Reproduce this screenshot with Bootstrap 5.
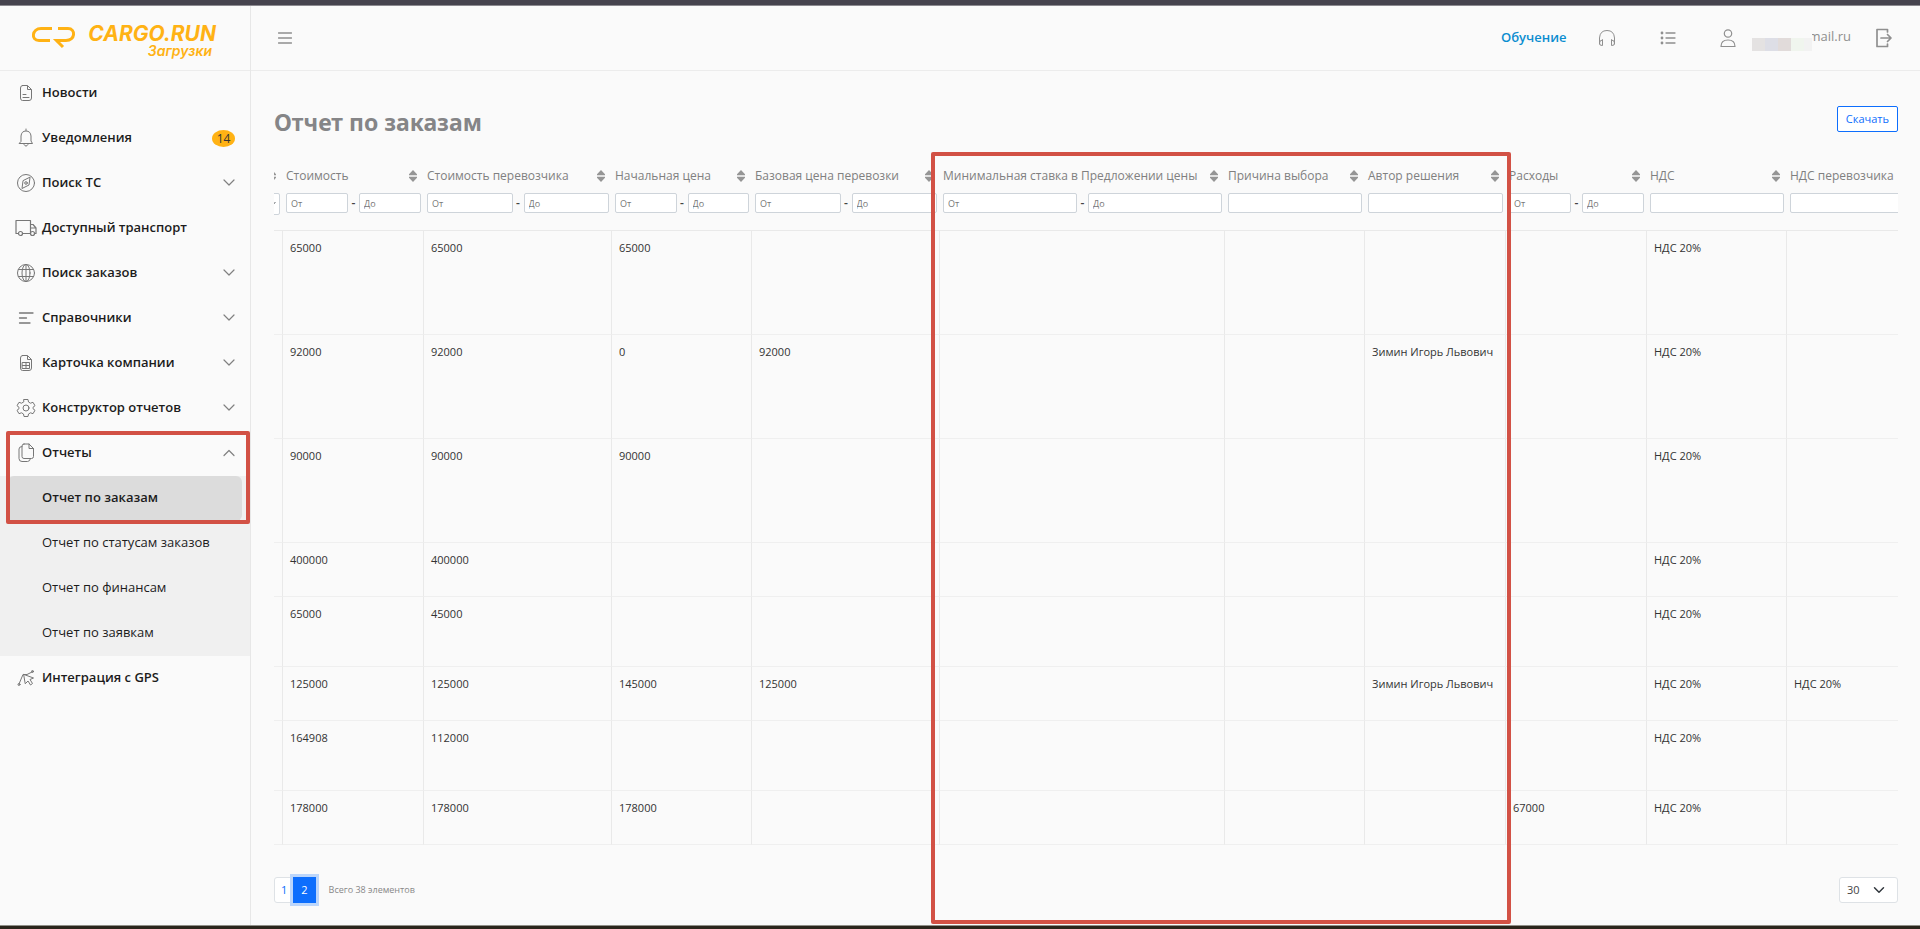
<!DOCTYPE html>
<html lang="ru">
<head>
<meta charset="utf-8">
<meta name="viewport" content="width=device-width, initial-scale=1">
<title>Отчет по заказам</title>
<link href="https://cdn.jsdelivr.net/npm/bootstrap@5.3.0/dist/css/bootstrap.min.css" rel="stylesheet">
<style>
  body { font-family: "Open Sans", "Noto Sans", sans-serif; font-size: 13px; background: #fafafa; color: #222; }
  a { text-decoration: none; color: inherit; }
  svg { display: block; fill: none; stroke: currentColor; stroke-linecap: round; stroke-linejoin: round; }
  .edge-top { height: 6px; background: #46434e; border-bottom: 1px solid #8c8a90; }
  .edge-bottom { height: 4px; background: #2b251c; border-top: 1px solid #8f8f88; }
  .marker { position: absolute; border: 4px solid #d25145; border-radius: 2px; pointer-events: none; z-index: 5; }

  /* sidebar */
  .side { width: 251px; flex: none; border-right: 1px solid #e7e7e7; }
  .brand { height: 65px; border-bottom: 1px solid #ececec; color: #ffb214; padding: 0 34px 0 31px; }
  .brand-mark { stroke-width: 3px; stroke-linecap: butt; stroke-linejoin: miter; }
  .brand-text { font-family: Inter, sans-serif; font-style: italic; text-align: right; padding-top: 6px; }
  .brand-name { font-size: 21px; line-height: 20px; font-weight: 700; }
  .brand-sub { font-size: 14px; line-height: 14px; font-weight: 600; padding-right: 4px; }
  .side .nav-link { height: 45px; padding: 0 15px 1px 12px; color: #1c1c1c; font-weight: 600; display: flex; align-items: center; }
  .side .nav-link .ico { width: 28px; margin-right: 2px; color: #777; display: flex; justify-content: center; }
  .side .nav-link .chev { margin-left: auto; color: #808080; }
  .sub { background: #f0f0f0; }
  .side .sub .nav-link { padding-left: 42px; font-weight: 400; }
  .side .sub .nav-link.active { background: #dcdcdc; border-radius: 6px; margin: 0 8px; padding-left: 34px; font-weight: 600; }
  .marker-menu { inset: 0 0 auto 6px; height: 93px; }
  .count { margin-left: auto; width: 23px; height: 17px; line-height: 17px; border-radius: 50%; padding: 0; background: #ffb214; color: #333; font-size: 12px; font-weight: 400; }

  /* top bar */
  .top { height: 65px; border-bottom: 1px solid #ececec; padding: 0 27px; color: #8f8f8f; }
  .top .btn { padding: 0; border: 0; color: inherit; }
  .top .tool { margin-left: 44px; }
  .learn { color: #0a8dd0; font-weight: 600; }
  .masked { width: 60px; height: 28px; z-index: 1; margin-right: -4px;
    background: linear-gradient(90deg, #e4e2e2 13px, #dddee6 13px 26px, #e1dbda 26px 39px, #f0f5ee 39px 52px, #f2f2f2 52px) 0 14px / 60px 13px no-repeat #fafafa; }
  .mail { height: 22px; }

  /* content */
  .content { padding: 35px 22px 22px 23px; }
  h1 { font-family: "Noto Sans", sans-serif; font-size: 23px; line-height: 32px; font-weight: 700; color: #858587; margin: 0 0 24px; }
  .btn-load { font-size: 11px; line-height: 16px; padding: 4px 8px; border-radius: 2px; --bs-btn-bg: #fff; }
  .grid-wrap { overflow-x: auto; scrollbar-width: none; }
  .grid-wrap::-webkit-scrollbar { display: none; }
  .report { table-layout: fixed; width: 1832px; border-collapse: separate; border-spacing: 0; }
  .report th { height: 69px; padding: 5px 2px 0 4px; vertical-align: top; font-weight: 400; font-size: 12px; line-height: 18px; color: #808080; border-bottom: 1px solid #e9e9e9; white-space: nowrap; }
  .report td { padding: 9px 7px 0; vertical-align: top; font-size: 11px; line-height: 16px; color: #333; border-left: 1px solid #e9e9e9; border-bottom: 1px solid #efefef; }
  .r-tall td { height: 104px; } .r-mid td { height: 70px; } .r-low td { height: 54px; }
  .cap { display: flex; justify-content: space-between; align-items: center; height: 18px; margin-bottom: 8px; padding-right: 4px; }
  .cap svg { fill: #959595; stroke: none; margin-left: auto; }
  .flt { display: flex; align-items: center; line-height: 20px; }
  .flt .form-control, .flt .form-select { flex: 1 1 0; width: 0; min-width: 0; height: 20px; min-height: 0; padding: 0 4px; font-size: 9px; line-height: 18px; border: 1px solid #ced4da; border-radius: 2px; }
  .flt .form-select { height: 22px; background-size: 8px; background-position: right 3px center; }
  .flt .form-control::placeholder { color: #777; }
  .flt span { width: 11px; text-align: center; color: #444; font-weight: 600; }

  .page-link { font-size: 11px; line-height: 16px; padding: 4px 7px; }
  .page-item:first-child .page-link { padding: 4px 6px; border-radius: 3px 0 0 3px; border-color: #dee2e6; }
  .page-item:last-child .page-link { border-radius: 0; box-shadow: 0 0 0 3px #bcd6fb; }
  .total { font-size: 9px; color: #888; margin-left: 13px; }
  .per { width: 59px; height: 26px; font-size: 11px; line-height: 16px; padding: 4px 20px 4px 7px; border-radius: 3px; background-size: 12px; background-position: right 12px center; color: #444; }
  .marker-cols { left: 680px; width: 580px; top: 146px; bottom: 1px; }
</style>
</head>
<body class="d-flex flex-column min-vh-100">
<svg width="0" height="0" class="position-absolute" aria-hidden="true">
  <symbol id="down" viewBox="0 0 12 12"><path d="M1 3l5 5 5-5" stroke-width="1.2"/></symbol>
  <symbol id="up" viewBox="0 0 12 12"><path d="M1 8.500l5-5 5 5" stroke-width="1.2"/></symbol>
  <symbol id="sort" viewBox="0 0 8 12"><path d="M4 0l4 4.200v1H0v-1zM4 12l4-4.200v-1H0v1z"/></symbol>
</svg>
<div class="edge-top"></div>
<div class="d-flex flex-grow-1">
  <aside class="side">
    <a class="brand d-flex align-items-center justify-content-between" href="#" aria-label="CARGO.RUN Загрузки">
      <svg class="brand-mark" width="46" height="24" viewBox="31 26 46 24"><path d="M52 28.500H41C32 28.500 30.500 40.500 39 40.500H50M58 28.500H68C76 28.500 75.500 40.500 66 40.500H56.500L63 47"/></svg>
      <div class="brand-text"><div class="brand-name">CARGO.RUN</div><div class="brand-sub">Загрузки</div></div>
    </a>
    <nav class="nav flex-column flex-nowrap">
      <a class="nav-link" href="#"><span class="ico"><svg width="16" height="18" viewBox="0 0 16 18"><path d="M4.500 1.500H9.500L13.500 5.500V14Q13.500 16.500 11 16.500H4.500Q2.500 16.500 2.500 14V4Q2.500 1.500 4.500 1.500ZM9.500 2V5.500H13M5 10.500H8M5 13.500H11"/></svg></span>Новости</a>
      <a class="nav-link" href="#"><span class="ico"><svg width="18" height="20" viewBox="0 0 18 20"><path d="M9 1V2.500M2.500 15.500H15.500L14 13V8Q13.500 3 9 3T4 8V13ZM7 16.500Q9 20 11 16.500"/></svg></span>Уведомления<span class="badge count">14</span></a>
      <a class="nav-link" href="#"><span class="ico"><svg width="20" height="20" viewBox="0 0 20 20"><circle cx="10" cy="10" r="8.500"/><path d="M14 4.500L13 12 6 15.500 7 8Z"/><circle cx="10" cy="10" r="1.300"/></svg></span>Поиск ТС<svg class="chev" width="12" height="12"><use href="#down"/></svg></a>
      <a class="nav-link" href="#"><span class="ico"><svg width="22" height="18" viewBox="0 0 22 18" stroke-width="1.200"><path d="M3.500 14.500H1V1.500H15.500V14.500H7.500M15.500 5.500H18L21 9V14.500H19.500M15.500 9H21"/><circle cx="5.500" cy="14.500" r="2"/><circle cx="17.500" cy="14.500" r="2"/></svg></span>Доступный транспорт</a>
      <a class="nav-link" href="#"><span class="ico"><svg width="20" height="20" viewBox="0 0 20 20"><circle cx="10" cy="10" r="8.500"/><ellipse cx="10" cy="10" rx="4" ry="8.500"/><path d="M10 1.500V18.500M2.500 6.500H17.500M2.500 13.500H17.500"/></svg></span>Поиск заказов<svg class="chev" width="12" height="12"><use href="#down"/></svg></a>
      <a class="nav-link" href="#"><span class="ico"><svg width="16" height="14" viewBox="0 0 16 14" stroke-width="1.300"><path d="M1.500 2H15M1.500 7H8.500M1.500 12H12"/></svg></span>Справочники<svg class="chev" width="12" height="12"><use href="#down"/></svg></a>
      <a class="nav-link" href="#"><span class="ico"><svg width="16" height="18" viewBox="0 0 16 18"><path d="M4.500 1.500H9.500L13.500 5.500V14Q13.500 16.500 11 16.500H4.500Q2.500 16.500 2.500 14V4Q2.500 1.500 4.500 1.500ZM9.500 2V5.500H13M4.500 8.500H11.500V14.500H4.500ZM4.500 11.500H11.500M8 8.500V14.500"/></svg></span>Карточка компании<svg class="chev" width="12" height="12"><use href="#down"/></svg></a>
      <a class="nav-link" href="#"><span class="ico"><svg width="20" height="20" viewBox="0 0 20 20"><circle cx="10" cy="10" r="3"/><path d="M8 1.500H12L12.500 4 14.500 5.200 17 4.300 19 7.700 17 9.300V10.700L19 12.300 17 15.700 14.500 14.800 12.500 16 12 18.500H8L7.500 16 5.500 14.800 3 15.700 1 12.300 3 10.700V9.300L1 7.700 3 4.300 5.500 5.200 7.500 4Z"/></svg></span>Конструктор отчетов<svg class="chev" width="12" height="12"><use href="#down"/></svg></a>
      <div class="position-relative">
        <a class="nav-link" href="#"><span class="ico"><svg width="18" height="20" viewBox="0 0 18 20"><path d="M7 1H12L16.500 5.500V13.500Q16.500 15.500 14.500 15.500H7Q5 15.500 5 13.500V3Q5 1 7 1ZM12 1V5.500H16.500M5 3.500Q2 3.500 2 6V15.500Q2 18.500 5 18.500H10.500Q13 18.500 13.500 15.500"/></svg></span>Отчеты<svg class="chev" width="12" height="12"><use href="#up"/></svg></a>
        <div class="sub"><a class="nav-link active" href="#" aria-current="page">Отчет по заказам</a></div>
        <div class="marker marker-menu"></div>
      </div>
      <div class="sub">
        <a class="nav-link" href="#">Отчет по статусам заказов</a>
        <a class="nav-link" href="#">Отчет по финансам</a>
        <a class="nav-link" href="#">Отчет по заявкам</a>
      </div>
      <a class="nav-link" href="#"><span class="ico"><svg width="18" height="18" viewBox="0 0 18 18"><path d="M2 15L6 5.500H10L16 2.500M7 5.500L16.500 9 13 10.500 15.500 14.500 13.500 16 11 12 8.500 14.500Z"/><circle cx="2" cy="15.500" r="1"/><circle cx="15.500" cy="2.500" r="1"/></svg></span>Интеграция с GPS</a>
    </nav>
  </aside>

  <main class="flex-grow-1 position-relative overflow-hidden">
    <header class="top d-flex align-items-center">
      <button class="btn" type="button" aria-label="Меню"><svg width="14" height="12" viewBox="0 0 14 12" stroke="#aaa" stroke-width="1.500"><path d="M.5 1H13.500M.5 6H13.500M.5 11H13.500"/></svg></button>
      <a class="learn ms-auto" href="#">Обучение</a>
      <a class="ms-4 ps-2" href="#" aria-label="Поддержка"><svg width="18" height="18" viewBox="0 0 18 18"><path d="M1.500 15V9Q2 1.500 9 1.500T16.500 9V15M4.500 11V16.500Q1.500 17 1.500 14T4.500 11ZM13.500 11V16.500Q16.500 17 16.500 14T13.500 11Z"/></svg></a>
      <a class="tool" href="#" aria-label="Список"><svg width="16" height="14" viewBox="0 0 16 14" stroke-width="1.300"><path d="M6 2H15M6 7H15M6 12H15"/><path d="M2 2V2.010M2 7V7.010M2 12V12.010" stroke-width="2.800"/></svg></a>
      <a class="tool d-flex align-items-center" href="#"><svg class="me-3" width="16" height="20" viewBox="0 0 16 20" stroke-width="1.200"><circle cx="8" cy="5.500" r="3.700"/><path d="M1 18.500Q1 12 8 12T15 18.500Z"/></svg><span class="masked"></span><span class="mail">mail.ru</span></a>
      <button class="btn ms-4" type="button" aria-label="Выйти"><svg width="18" height="20" viewBox="0 0 18 20" stroke-width="1.700"><path d="M12.500 4V1.500H2V18.500H12.500V16M6 10H15.500M12.500 6.500L16 10 12.500 13.500"/></svg></button>
    </header>

    <div class="content">
      <div class="d-flex justify-content-between align-items-start">
        <h1>Отчет по заказам</h1>
        <button class="btn btn-outline-primary btn-load" type="button">Скачать</button>
      </div>

      <div class="grid-wrap" id="gridWrap">
        <table class="report">
          <colgroup id="cols"></colgroup>
          <thead><tr id="head"></tr></thead>
          <tbody id="rows"></tbody>
        </table>
      </div>

      <div class="d-flex align-items-center mt-3 pt-3">
        <ul class="pagination mb-0">
          <li class="page-item"><a class="page-link" href="#">1</a></li>
          <li class="page-item active"><a class="page-link" href="#">2</a></li>
        </ul>
        <span class="total">Всего 38 элементов</span>
        <select class="form-select per ms-auto" aria-label="Строк на странице"><option>30</option><option>50</option></select>
      </div>
    </div>
    <div class="marker marker-cols"></div>
  </main>
</div>
<div class="edge-bottom"></div>

<script src="https://cdn.jsdelivr.net/npm/bootstrap@5.3.0/dist/js/bootstrap.bundle.min.js"></script>
<script>
  // name, width, filter kind
  const columns = [
    ['', 140, 'select'], ['Стоимость', 141, 'range'], ['Стоимость перевозчика', 188, 'range'],
    ['Начальная цена', 140, 'range'], ['Базовая цена перевозки', 188, 'range'],
    ['Минимальная ставка в Предложении цены', 285, 'range'], ['Причина выбора', 140, 'text'],
    ['Автор решения', 141, 'text'], ['Расходы', 141, 'range'], ['НДС', 140, 'text'], ['НДС перевозчика', 188, 'text']
  ];
  const vat = 'НДС 20%', author = 'Зимин Игорь Львович';
  const rows = [
    ['tall', '', '65000', '65000', '65000', '', '', '', '', '', vat, ''],
    ['tall', '', '92000', '92000', '0', '92000', '', '', author, '', vat, ''],
    ['tall', '', '90000', '90000', '90000', '', '', '', '', '', vat, ''],
    ['low', '', '400000', '400000', '', '', '', '', '', '', vat, ''],
    ['mid', '', '65000', '45000', '', '', '', '', '', '', vat, ''],
    ['low', '', '125000', '125000', '145000', '125000', '', '', author, '', vat, vat],
    ['mid', '', '164908', '112000', '', '', '', '', '', '', vat, ''],
    ['low', '', '178000', '178000', '178000', '', '', '', '', '67000', vat, '']
  ];
  const filter = {
    select: n => `<select class="form-select" aria-label="Фильтр"><option></option></select>`,
    text: n => `<input class="form-control" type="text" aria-label="${n}">`,
    range: n => `<input class="form-control" type="text" placeholder="От" aria-label="${n}, от"><span>-</span><input class="form-control" type="text" placeholder="До" aria-label="${n}, до">`
  };
  document.getElementById('cols').innerHTML = columns.map(c => `<col style="width:${c[1]}px">`).join('');
  document.getElementById('head').innerHTML = columns.map(([n, , k]) =>
    `<th scope="col"><div class="cap">${n}<svg width="8" height="12"><use href="#sort"/></svg></div><div class="flt">${filter[k](n)}</div></th>`).join('');
  document.getElementById('rows').innerHTML = rows.map(([h, ...c]) =>
    `<tr class="r-${h}">${c.map(v => `<td>${v}</td>`).join('')}</tr>`).join('');
  document.getElementById('gridWrap').scrollLeft = 132;
</script>
</body>
</html>
